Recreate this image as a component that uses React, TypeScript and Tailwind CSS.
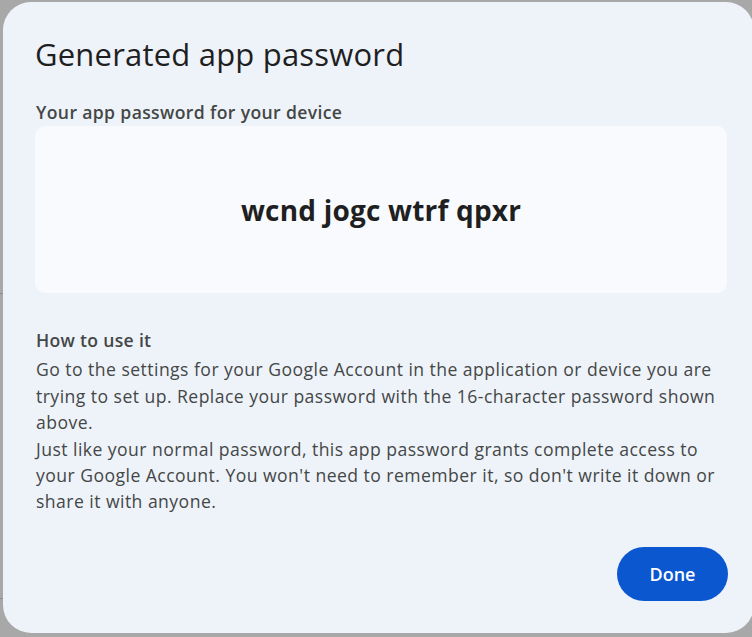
import React from 'react';

const font = { fontFamily: '"Open Sans", "Noto Sans", Arial, sans-serif' };

export default function App() {
  return (
    <div className="w-[752px] h-[637px] bg-[#a8a8a8] overflow-hidden relative" style={font}>
      {/* Page behind the scrim */}
      <div className="absolute left-0 top-0 w-[3px] h-full">
        <div className="absolute top-[293px] left-0 w-[3px] h-px bg-[#8c8c8c]" />
        <div className="absolute top-[598px] left-0 w-[3px] h-px bg-[#8c8c8c]" />
      </div>

      {/* Dialog */}
      <div className="ml-[3px] mt-[2px] w-[751px] h-[631px] rounded-[28px] bg-[#eef3fa] flex flex-col pl-[32px] pr-[27px] pt-[32px] pb-[32px]">
        <h1 className="text-[31px] leading-[40px] tracking-[0.2px] text-[#1f1f1f]">Generated app password</h1>

        <p className="mt-[25px] text-[17.6px] leading-[26.4px] tracking-[0.35px] font-semibold text-[#444746] pl-px">
          Your app password for your device
        </p>

        <div className="mt-px w-[692px] h-[167px] rounded-[10px] bg-[#f8fafd] flex items-center justify-center">
          <span className="text-[28px] font-bold text-[#1f1f1f] tracking-[0.2px]">wcnd jogc wtrf qpxr</span>
        </div>

        <div className="mt-[34px] text-[17.6px] leading-[26.4px] tracking-[0.45px] text-[#444746] pl-px">
          <p className="font-semibold tracking-[0.3px]">How to use it</p>
          <p className="mt-[2.6px]">
            Go to the settings for your Google Account in the application or device you are
            <br />
            trying to set up. Replace your password with the 16-character password shown
            <br />
            above.
          </p>
          <p>
            Just like your normal password, this app password grants complete access to
            <br />
            your Google Account. You won't need to remember it, so don't write it down or
            <br />
            share it with anyone.
          </p>
        </div>

        <div className="flex-1" />

        <div className="flex justify-end">
          <button className="w-[111px] h-[54px] rounded-full bg-[#0b57d0] text-white text-[18px] font-semibold mr-[-1px]">
            Done
          </button>
        </div>
      </div>
    </div>
  );
}
